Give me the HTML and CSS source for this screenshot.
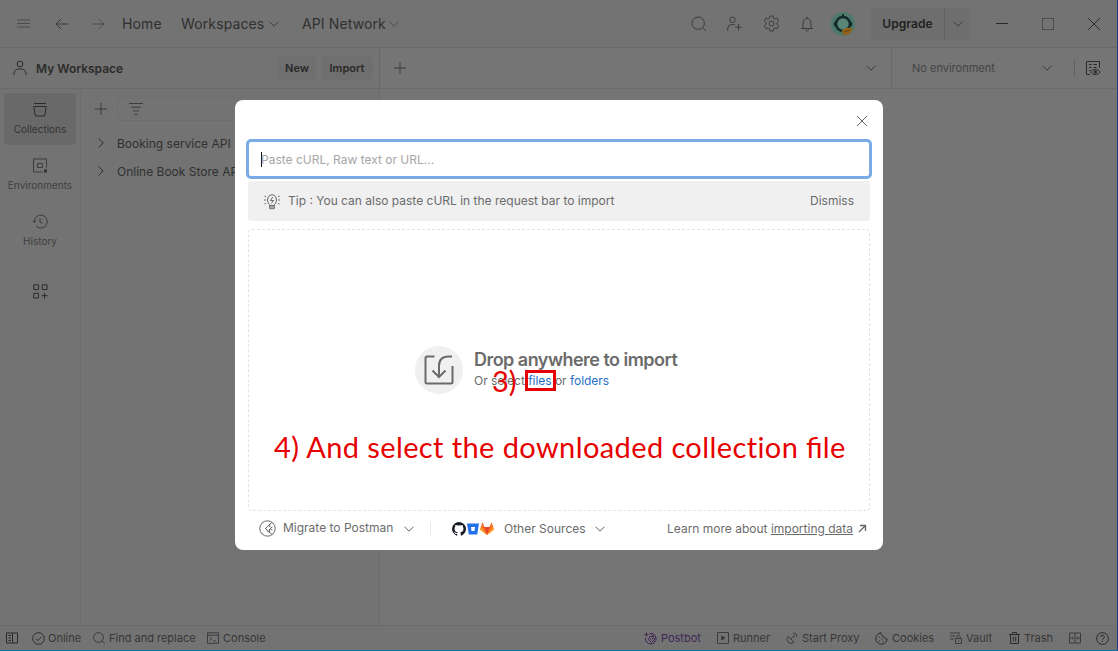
FILE: index.html
```html
<!DOCTYPE html>
<html lang="en">
<head>
<meta charset="utf-8">
<title>Import</title>
<link rel="stylesheet" href="styles.css">
</head>
<body>
<svg class="defs" width="0" height="0">
  <symbol id="chev" viewBox="0 0 10 6"><path d="M.5 .7l4.500 4.500L9.500.7"/></symbol>
  <symbol id="right" viewBox="0 0 6 10"><path d="M.7.500L5.200 5 .7 9.500"/></symbol>
  <symbol id="plus" viewBox="0 0 12 12"><path d="M6 0v12M0 6h12"/></symbol>
  <symbol id="search" viewBox="0 0 16 16"><circle cx="7.2" cy="7.2" r="6.2"/><path d="M11.7 11.7L15 15"/></symbol>
</svg>
<div class="app">
  <header class="topbar">
    <svg class="i dim" width="14" height="9" viewBox="0 0 14 9"><path d="M0 1h13M0 4.5h13M0 8h13"/></svg>
    <svg class="i" width="14" height="12" viewBox="0 0 14 12"><path d="M12 6H0M5 1L0 6l5 5"/></svg>
    <svg class="i dim" width="14" height="12" viewBox="0 0 14 12"><path d="M0 6h12M7 1l5 5-5 5"/></svg>
    <span class="nav">Home</span>
    <span class="nav">Workspaces</span>
    <svg class="i" width="10" height="6"><use href="#chev"/></svg>
    <span class="nav">API Network</span>
    <svg class="i dim" width="10" height="6"><use href="#chev"/></svg>
    <svg class="i" width="16" height="16"><use href="#search"/></svg>
    <svg class="i" width="16" height="16" viewBox="0 0 16 16"><circle cx="5.5" cy="3.8" r="2.7"/><path d="M.7 15v-2.500a4 4 0 0 1 4-4h1.500a4 4 0 0 1 2 .6M11.500 8v6.500M8.200 11.200h6.600"/></svg>
    <svg class="i" width="17" height="17" viewBox="0 0 17 17"><path d="M6.900 1h3.200l.5 2.200 1.300.8 2.200-.7 1.600 2.700-1.700 1.600v1.800l1.700 1.600-1.600 2.700-2.200-.7-1.300.8-.5 2.200H6.900l-.5-2.200-1.300-.8-2.200.7L1.300 11 3 9.400V7.600L1.300 6l1.600-2.700 2.200.7 1.300-.8z"/><circle cx="8.500" cy="8.500" r="2.500"/></svg>
    <svg class="i" width="14" height="16" viewBox="0 0 14 16"><path d="M7 .5v1.300M1 12.500h12M2.500 12.500c.5-1 .6-2 .6-5.500a3.900 4.700 0 0 1 7.800 0c0 3.500.1 4.500.6 5.500M5.500 13.500a1.500 1.500 0 0 0 3 0"/></svg>
    <svg width="24" height="26" viewBox="0 0 24 26"><circle cx="12" cy="13" r="12" fill="#4f7a6b"/><circle cx="12" cy="13" r="7" fill="#598676" stroke="#142b2b" stroke-width="2.600"/><path d="M12 3v4" stroke="#142b2b" stroke-width="2"/><path d="M3.600 11v4M20.400 11v4" stroke="#142b2b" stroke-width="1.500"/><path d="M11 19.500c2-2 5-3 9-2.500l1.500.7c-.5 4-4.500 7-8.500 6.300-1.500-.5-2.500-2.500-2-4.500z" fill="#94631a"/><path d="M13 21l6-2" stroke="#664416"/></svg>
    <div class="upgrade"><b>Upgrade</b><span><svg class="i" width="10" height="6"><use href="#chev"/></svg></span></div>
    <svg class="i dark" width="12" height="12" viewBox="0 0 12 12"><path d="M0 5.500h12"/></svg>
    <svg class="i dim" width="12" height="12" viewBox="0 0 12 12"><path d="M.5.500h11v11H.5z"/></svg>
    <svg class="i dark" width="12" height="12" viewBox="0 0 12 12"><path d="M.3.300l11.400 11.400M11.700.300L.3 11.700"/></svg>
  </header>

  <div class="subbar">
    <div class="ws">
      <svg class="i dark" width="14" height="16" viewBox="0 0 14 16"><circle cx="7" cy="4" r="2.900"/><path d="M1 15v-1.500a4.500 4.500 0 0 1 4.500-4.500h3a4.500 4.500 0 0 1 4.500 4.500V15"/></svg>
      <b>My Workspace</b><span class="btn new">New</span><span class="btn">Import</span>
    </div>
    <div class="tabs"><svg class="i" width="12" height="12"><use href="#plus"/></svg><svg class="i" width="10" height="6"><use href="#chev"/></svg></div>
    <div class="env"><span>No environment</span><svg class="i" width="10" height="6"><use href="#chev"/></svg><i></i>
      <svg class="i dark" width="16" height="16" viewBox="0 0 16 16"><path d="M5 14.500H1.500v-13h13V8M4 4.500h2.500M4 7.500h2.500M4 10.500h1.500M8.500 4.500h3.500M8.500 7.500h3"/><path d="M5.800 12c2-3.500 7.200-3.500 9.200 0-2 3.500-7.200 3.500-9.200 0z"/><circle cx="10.400" cy="12" r="1.300" fill="#303030"/></svg>
    </div>
  </div>

  <main class="body">
    <nav class="rail">
      <div class="item on"><svg class="i dark" width="14" height="15" viewBox="0 0 14 15"><path d="M1 1.500h12M.7 4.500h12.600l-1.700 9.500H2.400z"/></svg>Collections</div>
      <div class="item"><svg class="i" width="14" height="15" viewBox="0 0 14 15"><path d="M9.500 14H.5V1h13v8.500M4.500 5.500h5v4h-5z"/><path d="M11 11.500h3v3h-3z" fill="#333" stroke="none"/></svg>Environments</div>
      <div class="item"><svg class="i" width="16" height="15" viewBox="0 0 16 15"><path d="M2.300 8a6.500 6.500 0 1 1 2 4.300M.3 6.500l2 2 2-2M8 4v4l2.300 1.300"/></svg>History</div>
      <hr>
      <svg class="i dark grid4" width="15" height="15" viewBox="0 0 15 15"><path d="M.8.800h4.700v4.700H.8zM9.300.800H14v4.700H9.300zM.8 9.300h4.700V14H.8zM11.600 8.700v6M8.600 11.700h6"/></svg>
    </nav>
    <section class="list">
      <div class="filter"><svg class="i" width="12" height="12"><use href="#plus"/></svg><div><svg class="i" width="14" height="12" viewBox="0 0 14 12"><path d="M0 .500h14M2 4.200h10M4 7.900h6M5.500 11.500h3"/></svg></div></div>
      <div class="row"><svg class="i dark" width="6" height="10"><use href="#right"/></svg>Booking service API</div>
      <div class="row"><svg class="i dark" width="6" height="10"><use href="#right"/></svg>Online Book Store API</div>
    </section>
    <section class="work"></section>
  </main>

  <footer class="status">
    <svg class="i dark" width="13" height="12" viewBox="0 0 13 12"><path d="M.5 1h11v10H.5zM6.500 1v10M2.500 3.500h2.500M2.500 6h2.500M2.500 8.500h2.500"/></svg>
    <svg class="i dark" width="13" height="13" viewBox="0 0 13 13"><circle cx="6.500" cy="6.500" r="5.800"/><path d="M3.800 6.600l2 2 3.700-3.800"/></svg><span>Online</span>
    <svg class="i" width="12" height="12" viewBox="0 0 12 12"><circle cx="5.500" cy="5.500" r="4.900"/><path d="M9 9l2.700 2.700"/></svg><span>Find and replace</span>
    <svg class="i" width="12" height="12" viewBox="0 0 12 12"><path d="M.5.800h11v10.500H.5zM.5 3.200h11M2.700 5.300l1.800 1.600-1.800 1.600M6 9h3"/></svg><span>Console</span>
    <svg class="i violet" width="13" height="13" viewBox="0 0 13 13"><path d="M5.500 1.500a5.300 5.300 0 1 1-4 4.500M2.500.500v4M.500 2.500h4M7 1.500l2.500 3M4.500 7.500L6 4.500h3.500l1 3-3 3zM6.500 6.500v1.300M8.500 6v1.300"/></svg><span class="violet">Postbot</span>
    <svg class="i" width="12" height="12" viewBox="0 0 12 12"><path d="M.5.500h11v11H.5z"/><path d="M4.500 4L8 6 4.500 8z" fill="#3a3a3a"/></svg><span>Runner</span>
    <svg class="i" width="12" height="12" viewBox="0 0 12 12"><path d="M2 4.500a3.800 3.800 0 1 0 6 5.500zM5 7l2.500-2.500M7 3.500a1.700 1.700 0 0 1 1.600 1.700M7 1a4 4 0 0 1 4 4"/></svg><span>Start Proxy</span>
    <svg class="i dark" width="13" height="13" viewBox="0 0 13 13"><path d="M6 .800a5.700 5.700 0 1 0 6.200 6.200c-1.500.3-2.500-.5-2.500-1.800-1.600.2-2.700-.7-2.300-2C6.200 3 5.800 2 6 .800z"/><path d="M3.500 5h1M4 9h1M7.500 9.500h1M6.500 7h1"/></svg><span>Cookies</span>
    <svg class="i" width="12" height="12" viewBox="0 0 12 12"><path d="M0 1h10M0 4h5M0 7h4M5.500 6.500h6v5h-6zM6.800 6.500V5a1.700 1.700 0 0 1 3.400 0v1.500M8.500 8.500v1.300"/></svg><span>Vault</span>
    <svg class="i dark" width="11" height="12" viewBox="0 0 11 12"><path d="M0 2.500h11M3.500 2.500v-2h4v2M1.500 2.500v9h8v-9M4.300 4.500v5M6.700 4.500v5"/></svg><span>Trash</span>
    <svg class="i" width="12" height="12" viewBox="0 0 12 12"><path d="M.5 1h11v10H.5zM6 1v10M.5 6h3.700M7.800 6h3.700M3 4.800L4.300 6 3 7.200M9 4.800L7.700 6 9 7.200"/></svg>
    <svg class="i dark" width="13" height="13" viewBox="0 0 13 13"><circle cx="6.500" cy="6.500" r="5.900"/><path d="M4.700 5a1.800 1.800 0 1 1 2.600 1.600c-.6.300-.8.600-.8 1.200M6.500 8.800v1.100"/></svg>
  </footer>
</div>

<div class="modal">
  <div class="head"><svg class="m" width="12" height="12" viewBox="0 0 12 12"><path d="M1 1l10 10M11 1L1 11"/></svg></div>
  <div class="input"><i></i><span>Paste cURL, Raw text or URL...</span></div>
  <div class="tip">
    <svg class="m" width="16" height="17" viewBox="0 0 16 17"><path d="M5.700 12.500c0-1.500-2.200-2.500-2.200-5.500a4.500 5.200 0 0 1 9 0c0 3-2.200 4-2.200 5.500zM5.700 12.500v3.200h4.600v-3.200M5.700 14h4.600M8.700 4L6.500 7.500h3L7.300 10.500M.5 3l1.500.7M0 7h1.800M.5 11l1.500-.7M15.500 3l-1.500.7M16 7h-1.800M15.500 11l-1.500-.7"/></svg>
    <span>Tip : You can also paste cURL in the request bar to import</span><span class="dismiss">Dismiss</span>
  </div>
  <div class="drop">
    <div class="disc"><svg width="30" height="30" viewBox="0 0 30 30"><path d="M10.500 1.500H3a1.500 1.500 0 0 0-1.500 1.500v24A1.500 1.500 0 0 0 3 28.500h24a1.500 1.500 0 0 0 1.500-1.500V11M28 1.500h-3.500C18.500 1.500 15 5 15 11v11M8.500 15.500L15 22l6.500-6.500"/></svg></div>
    <div class="msg"><h1>Drop anywhere to import</h1><p>Or select <a>files</a> or <a>folders</a></p></div>
  </div>
  <div class="foot">
    <svg class="m" width="17" height="17" viewBox="0 0 17 17"><circle cx="8.500" cy="8.500" r="7.700"/><path d="M13 2.300L6.500 8.500l6.500 6M10.800 4.500v2.700M13.300 7L11 8.700l2.300 1.500M6.500 8.500l3.500 4M10.500 9v3"/></svg>
    <span class="mig">Migrate to Postman</span>
    <svg class="m" width="10" height="6"><use href="#chev"/></svg><i></i>
    <svg width="14" height="14" viewBox="0 0 16 16"><path fill="#161b22" d="M8 0a8 8 0 0 0-2.530 15.590c.4.070.55-.17.55-.38v-1.490c-2.010.37-2.530-.49-2.690-.94-.09-.23-.48-.94-.82-1.130-.28-.15-.68-.52-.01-.53.63-.01 1.080.58 1.230.82.72 1.210 1.870.87 2.330.66.070-.52.280-.87.510-1.070-1.780-.2-3.640-.89-3.640-3.950 0-.87.310-1.590.82-2.150-.08-.2-.36-1.020.08-2.120 0 0 .67-.21 2.200.82a7.400 7.400 0 0 1 4 0c1.530-1.040 2.200-.82 2.200-.82.44 1.100.16 1.920.08 2.120.51.560.82 1.270.82 2.150 0 3.070-1.870 3.750-3.650 3.950.29.250.54.730.54 1.480v2.200c0 .21.150.46.550.38A8 8 0 0 0 8 0z"/></svg>
    <svg width="12" height="12" viewBox="0 0 12 12"><path fill="#2470e8" d="M0 .500h12l-1.800 11H1.800z"/><path fill="#fff" d="M4 4h4L7.500 8h-3z"/></svg>
    <svg width="14" height="13" viewBox="0 0 14 13"><path fill="#fc6d26" d="M0 7.500L2.500 0l2 5h5l2-5L14 7.500 7 13z"/><path fill="#e24329" d="M4.500 5h5L7 13z"/><path fill="#fca326" d="M0 7.500L1 5l6 8zM14 7.500L13 5l-6 8z"/></svg>
    <span>Other Sources</span>
    <svg class="m" width="10" height="6"><use href="#chev"/></svg>
    <span>Learn more about <u>importing data</u></span>
    <svg class="m bold" width="9" height="9" viewBox="0 0 9 9"><path d="M1 8l6-6M2 1.500h5.500V7"/></svg>
  </div>
</div>
<div class="note three">3)</div>
<div class="mark"></div>
<div class="note four">4) And select the downloaded collection <span class="lig">fi</span>le</div>
</body>
</html>
```
FILE: styles.css
```css
* { box-sizing: border-box; }
body { margin: 0; font-family: Inter, "Liberation Sans", sans-serif; color: #333; background: #757575; overflow: hidden; }
svg { display: block; overflow: visible; }
.defs { position: absolute; }
.i { fill: none; stroke: #3c3c3c; stroke-width: 1; }
.i.dim { stroke: #4c4c4c; }
.i.dark { stroke: #2b2b2b; }
.app { width: 1118px; height: 651px; display: flex; flex-direction: column; border-right: 1px solid #173a80; border-bottom: 1px solid #0872ad; }
.topbar { height: 48px; flex: none; border-bottom: 1px solid #696969; background: #737373; display: grid; align-items: center; padding-left: 17px;
  grid-template-columns: 39px 36px 30px 59px 88px 33px 87px 302px 36px 36px 37px 31px 40px 125px 46px 46px 12px; }
.nav { font-size: 14px; letter-spacing: .12px; white-space: nowrap; color: #303030; }
.upgrade { width: 99px; height: 32px; background: #6e6e6e; border-radius: 4px; display: flex; align-items: center; }
.upgrade b { width: 73px; text-align: center; font-size: 12px; font-weight: 600; letter-spacing: .05px; color: #222; }
.upgrade span { width: 26px; height: 32px; border-left: 1px solid #646464; display: grid; place-items: center; }
.subbar { height: 41px; flex: none; display: flex; border-bottom: 1px solid #6b6b6b; background: #737373; }
.ws { width: 380px; border-right: 1px solid #696969; display: grid; grid-template-columns: 23px 242px 43px 52px; align-items: center; padding-left: 13px; }
.ws b { font-size: 12px; font-weight: 600; color: #2b2b2b; }
.btn { height: 24px; line-height: 24px; text-align: center; font-size: 11px; font-weight: 600; background: #6f6f6f; border-radius: 4px; color: #292929; }
.new { width: 38px; }
.tabs { width: 512px; border-right: 1px solid #696969; background: #757575; display: flex; align-items: center; justify-content: space-between; padding: 0 15px 0 14px; }
.env { flex: 1; background: #757575; display: grid; grid-template-columns: 130px 32px 11px 16px; align-items: center; padding-left: 20px; }
.env span { font-size: 11px; color: #444; }
.env i { height: 16px; width: 1px; background: #606060; }
.body { flex: 1; display: flex; min-height: 0; }
.rail { width: 81px; border-right: 1px solid #6d6d6d; background: #737373; padding: 4px 4px 0; }
.item { width: 72px; height: 52px; margin-bottom: 4px; border-radius: 4px; display: flex; flex-direction: column; align-items: center; justify-content: space-between; padding: 9px 0 9px; font-size: 10px; line-height: 13px; color: #404040; }
.on { background: #696969; color: #333; }
.rail hr { width: 52px; margin: 1px auto 0; border: 0; border-top: 1px solid #707070; }
.grid4 { margin: 22px auto 0 29px; }
.list { width: 299px; border-right: 1px solid #6b6b6b; background: #737373; padding: 8px 8px 0 14px; }
.filter { display: flex; align-items: center; gap: 10px; height: 24px; margin-bottom: 8px; }
.filter div { flex: 1; height: 24px; border: 1px solid #6e6e6e; border-radius: 4px; display: flex; align-items: center; padding-left: 11px; }
.row { height: 28px; display: flex; align-items: center; gap: 13px; padding-left: 3px; font-size: 12px; color: #303030; }
.work { flex: 1; background: #757575; }
.status { height: 25px; flex: none; border-top: 1px solid #6b6b6b; background: #737373; display: grid; align-items: center; padding-left: 6px; font-size: 11px; white-space: nowrap; color: #363636;
  grid-template-columns: 26px 16px 45px 16px 98px 16px 421px 17px 56px 16px 53px 16px 73px 17px 58px 16px 43px 15px 45px 27px 13px; }
.status .violet { color: #3d2754; }
.status .i.violet { stroke: #3d2754; }

.modal { position: absolute; left: 235px; top: 100px; width: 648px; height: 450px; border-radius: 8px; background: #fff; color: #6b6b6b; font-size: 12px; padding: 0 11px; white-space: nowrap; }
.m { fill: none; stroke: #666; stroke-width: 1; }
.m.bold { stroke-width: 1.3; }
.head { height: 39px; display: flex; justify-content: flex-end; padding: 15px 4px 0 0; }
.input { height: 40px; border: 3px solid #7aabe6; border-radius: 5px; display: flex; align-items: center; padding-left: 12px; color: #a6a6a6; }
.input i { width: 1px; height: 15px; background: #111; margin-right: -1px; }
.tip { height: 40px; margin: 2px 2px 8px; background: #f0f0f0; border-radius: 3px; display: flex; align-items: center; gap: 8px; padding: 0 16px; }
.tip span { padding-bottom: 1px; }
.dismiss { margin-left: auto; }
.drop { height: 282px; margin: 0 2px; border: 1px dashed #e3e3e3; border-radius: 4px; display: flex; align-items: center; gap: 11px; padding-left: 166px; }
.disc { width: 48px; height: 48px; border-radius: 50%; background: #f0f0f0; display: grid; place-items: center; }
.disc svg { fill: none; stroke: #6b6b6b; stroke-width: 2; }
.msg { padding-bottom: 2px; }
.msg h1 { margin: 0; font-size: 18px; line-height: 24px; font-weight: 600; letter-spacing: -.53px; }
.msg p { margin: 0; font-size: 12px; line-height: 18px; letter-spacing: -.03px; }
.msg a { color: #1f70c8; }
.foot { height: 35px; display: grid; align-items: center; padding-left: 13px;
  grid-template-columns: 24px 121px 26px 22px 15px 13px 24px 91px 72px 191px 9px; }
.foot .mig { padding-bottom: 2px; }
.foot i { width: 1px; height: 13px; background: #e8e8e8; }
.note { position: absolute; font-family: Lato, Carlito, sans-serif; color: #e60000; white-space: nowrap; line-height: 36px; }
.three { left: 492px; top: 363px; font-size: 29px; }
.four { left: 274px; top: 429px; font-size: 29px; letter-spacing: .4px; }
.lig { letter-spacing: 0; }
.mark { position: absolute; left: 525px; top: 370px; width: 31px; height: 21px; border: 3px solid #e60000; }
```
